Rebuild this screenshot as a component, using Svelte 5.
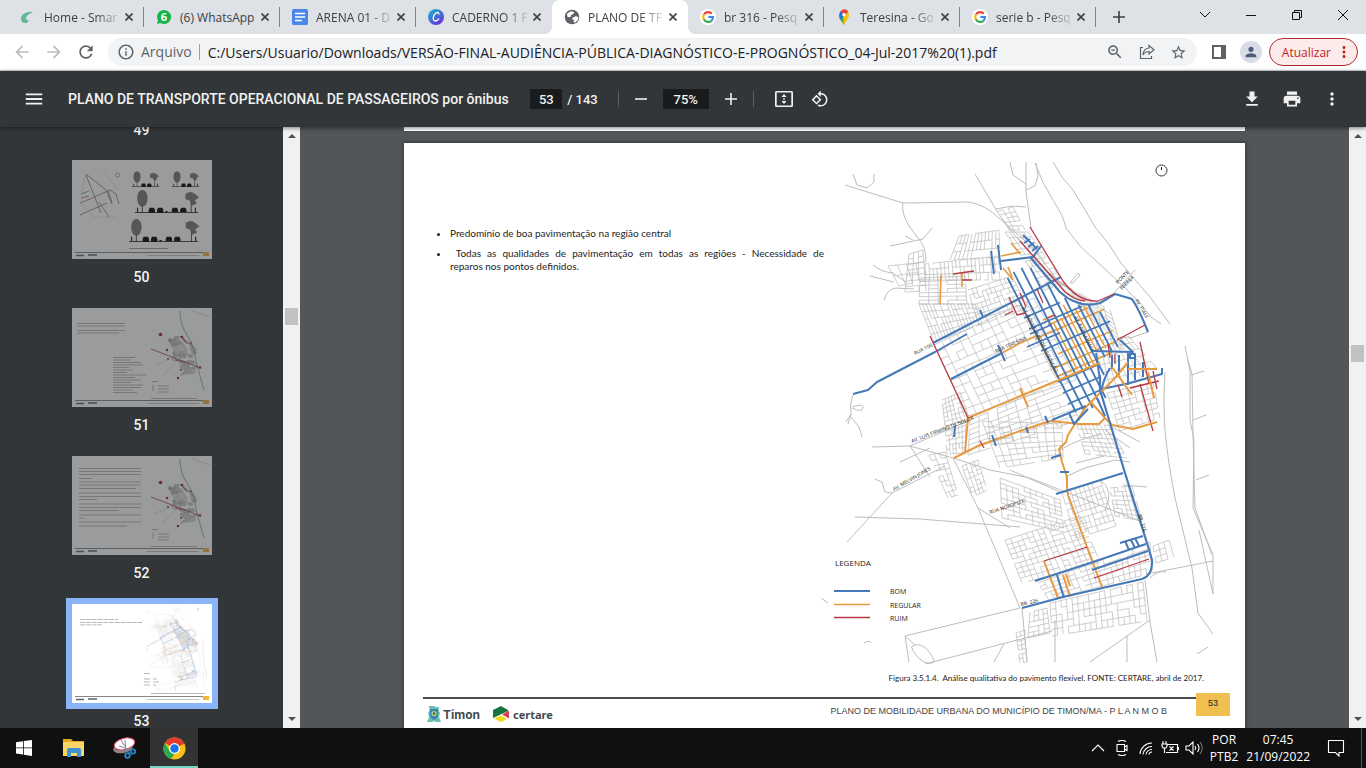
<div class="window">
  <header class="tabs">
    {#each tabs as tab}
      <div class="tab" class:active={tab.active}>
        {@render favicon(tab.icon)}
        <span class="tab-title" class:whole={tab.whole}>{tab.title}</span>
        <button class="tab-close" aria-label="Fechar">
          <svg viewBox="0 0 8 8" width="8" height="8"><path d="M.5.5l7 7M7.5.5l-7 7" /></svg>
        </button>
      </div>
    {/each}
    <button class="new-tab" aria-label="Nova guia">
      <svg viewBox="0 0 12 12" width="12" height="12"><path d="M6 0v12M0 6h12" /></svg>
    </button>
    <div class="controls">
      <button aria-label="Pesquisar guias"><svg viewBox="0 0 12 12" width="12" height="12"><path d="M1 3l5 5 5-5" /></svg></button>
      <button aria-label="Minimizar"><svg viewBox="0 0 12 12" width="12" height="12"><path d="M1 6.500h10" /></svg></button>
      <button aria-label="Restaurar"><svg viewBox="0 0 12 12" width="12" height="12"><path d="M1.500 3.500h7v7h-7zM3.500 3.500v-2h7v7h-2" /></svg></button>
      <button aria-label="Fechar janela"><svg viewBox="0 0 12 12" width="12" height="12"><path d="M1 1l10 10M11 1L1 11" /></svg></button>
    </div>
  </header>

  <nav class="address">
    <button class="nav-btn faded" aria-label="Voltar">{@render icon(paths.back, 20)}</button>
    <button class="nav-btn faded flip" aria-label="Avançar">{@render icon(paths.back, 20)}</button>
    <button class="nav-btn" aria-label="Recarregar">{@render icon(paths.reload, 20)}</button>
    <div class="omnibox">
      {@render icon(paths.info, 18)}
      <span class="scheme">Arquivo</span>
      <input aria-label="Endereço" value="C:/Users/Usuario/Downloads/VERSÃO-FINAL-AUDIÊNCIA-PÚBLICA-DIAGNÓSTICO-E-PROGNÓSTICO_04-Jul-2017%20(1).pdf">
      <button class="nav-btn" aria-label="Zoom">{@render icon(paths.zoomOut, 18)}</button>
      <button class="nav-btn" aria-label="Compartilhar">
        <svg class="line" viewBox="0 0 16 16" width="16" height="16"><path d="M4 3.500H1.500v11h11V12M10 1.500l5 4.200-5 4.200V7.500C7 7.500 5 9 4 11c.2-4 2.500-6.600 6-7z" /></svg>
      </button>
      <button class="nav-btn" aria-label="Favoritos">{@render icon(paths.star, 17)}</button>
    </div>
    <button class="nav-btn panel" aria-label="Painel lateral">
      <svg viewBox="0 0 14 14" width="14" height="14"><path fill="#5f6368" fill-rule="evenodd" d="M0 0h14v14H0zM2 2v10h7V2z" /></svg>
    </button>
    <button class="avatar" aria-label="Perfil">{@render icon(paths.person, 16)}</button>
    <button class="update">Atualizar {@render icon(paths.more, 18)}</button>
  </nav>

  <div class="pdf-bar">
    <div class="bar-start">
      <button aria-label="Menu">{@render icon(paths.menu, 22)}</button>
      <h1>PLANO DE TRANSPORTE OPERACIONAL DE PASSAGEIROS por ônibus</h1>
    </div>
    <div class="bar-middle">
      <input class="page-no" aria-label="Página" value="53">
      <span class="total">/ 143</span>
      <i></i>
      <button aria-label="Diminuir zoom"><svg viewBox="0 0 12 12" width="12" height="12"><path d="M0 5.200h12v1.600H0z" /></svg></button>
      <input class="zoom" aria-label="Nível de zoom" value="75%">
      <button aria-label="Aumentar zoom"><svg viewBox="0 0 12 12" width="12" height="12"><path d="M5.200 0h1.600v5.200H12v1.600H6.800V12H5.200V6.800H0V5.200h5.200z" /></svg></button>
      <i></i>
      <button class="fit" aria-label="Ajustar à página">
        <svg viewBox="0 0 18 16" width="18" height="16"><path fill-rule="evenodd" d="M1.500 0h15A1.500 1.500 0 0118 1.500v13a1.500 1.500 0 01-1.500 1.500h-15A1.500 1.500 0 010 14.500v-13A1.500 1.500 0 011.500 0zm.2 1.600v12.800h14.600V1.600zM9 3l2.500 3h-5zM9 13l2.500-3h-5zM8.200 7.200h1.600v1.600H8.200z" /></svg>
      </button>
      <button aria-label="Girar">{@render icon(paths.rotate, 18)}</button>
    </div>
    <div class="bar-end">
      <button aria-label="Baixar">{@render icon(paths.download, 20)}</button>
      <button aria-label="Imprimir">{@render icon(paths.print, 20)}</button>
      <button aria-label="Mais ações">{@render icon(paths.more, 20)}</button>
    </div>
  </div>

  <div class="viewer">
    <aside class="sidebar">
      <span class="thumb-no">49</span>
      {#each [50, 51, 52, 53] as number}
        <a class="thumb" class:current={number === 53} href="#page-{number}">
          <svg viewBox="0 0 140 99">
            <rect width="140" height="99" fill="#fff" />
            {#if number === 50}
              {@render streetProfiles()}
            {:else if number === 53}
              <path class="thumb-text" d="M8 15.500h38M8 18.500h62M8 20.800h22" stroke-dasharray="5 .8" />
              <svg x="70" y="2" width="70" height="86" viewBox="824 155 421 512" opacity=".8">{@render cityMap()}</svg>
              <path d="M72 69.500h6M72 75h6M72 78h6M72 81h6M81 75h4M81 78h6M81 81h3M79 89.500h54" stroke="#888" stroke-width=".6" />
            {:else}
              {@render accidentMap(number)}
            {/if}
            <path d="M3 92.500h128" stroke="#666" stroke-width=".8" />
            <path d="M4 95.500h8M16 95h9" stroke="#567" stroke-width="1.500" />
            <path d="M75 95.500h52" stroke="#aaa" stroke-width=".7" />
            <rect x="131" y="92" width="6" height="4" fill="#f0b43c" />
          </svg>
          <span class="thumb-no">{number}</span>
        </a>
      {/each}
    </aside>
    <div class="scrollbar side"><b></b></div>

    <main>
      <div class="prev-page"></div>
      <article class="page" id="page-53">
        <div class="slide">
          <ul>
            <li>Predomínio de boa pavimentação na região central</li>
            <li>&nbsp;Todas as qualidades de pavimentação em todas as regiões - Necessidade de reparos&nbsp;nos pontos definidos.</li>
          </ul>
          <svg class="map" viewBox="824 155 421 512">
            {@render cityMap()}
            <g class="street-names">
              {#each streetNames as s}
                <text transform="translate({s.x} {s.y}) rotate({s.angle})">{s.name}</text>
              {/each}
            </g>
            <text class="legend-title" x="835" y="566">LEGENDA</text>
            {#each legend as row}
              <path d="M834 {row.y}h36" stroke={row.color} stroke-width={row.width} />
              <text class="legend" x="890" y={row.y + 3}>{row.label}</text>
            {/each}
          </svg>
        </div>
        <p class="caption">Figura 3.5.1.4.&nbsp; Análise qualitativa do pavimento flexível. FONTE: CERTARE, abril de 2017.</p>
        <footer>
          <div class="foot">
            <div class="timon">
              <svg viewBox="0 0 14 16" width="14" height="16">
                <path d="M7 0l2 1 3 0-.5 3L13 7l-1 4 2 5H9l-2-1-2 1H0l2-5-1-4 1.500-3L2 0h3z" fill="#69bdb3" />
                <path d="M3 3h8v6c0 3-2 4-4 5-2-1-4-2-4-5z" fill="#3d84b5" />
                <circle cx="7" cy="7.500" r="2.600" fill="#b7d36a" /><circle cx="7" cy="7.500" r="1.200" fill="#276489" />
              </svg>
              Timon
            </div>
            <div class="certare">
              <svg viewBox="0 0 16 16" width="16" height="16">
                <path d="M0 4l8-4 7 4v1L0 12z" fill="#18733c" /><path d="M9 8.500l7-4v8z" fill="#dd4053" /><path d="M1 12.500l7-3 6 3.500-6 3z" fill="#f3d918" />
              </svg>
              certare
            </div>
            <span>PLANO DE MOBILIDADE URBANA DO MUNICÍPIO DE TIMON/MA - P L A N M O B</span>
          </div>
          <strong>53</strong>
        </footer>
      </article>
    </main>
    <div class="scrollbar main"><b></b></div>
  </div>

  <div class="taskbar">
    <button aria-label="Iniciar">
      <svg viewBox="0 0 16 16" width="16" height="16" fill="#fff"><path d="M0 2.200L7 1.200v6.300H0zM7.800 1.100L16 0v7.500H7.800zM0 8.300h7v6.300l-7-1zM7.800 8.300H16V16l-8.200-1.200z" /></svg>
    </button>
    <button aria-label="Explorador de Arquivos">
      <svg viewBox="0 0 22 18" width="22" height="18"><path d="M0 0h8l2 2h11v15H0z" fill="#e5a722" /><path d="M0 3h21v14H0z" fill="#fbd667" /><path d="M4 18V10.500a1.500 1.500 0 011.500-1.500h11a1.500 1.500 0 011.500 1.500V18h-4v-4H8v4z" fill="#3e93d1" /></svg>
    </button>
    <button aria-label="Ferramenta de Captura">
      <svg viewBox="0 0 24 22" width="24" height="22"><ellipse cx="11" cy="11" rx="10" ry="5" fill="#8d8588" transform="rotate(-12 11 11)" /><ellipse cx="12.500" cy="7" rx="10.500" ry="5.600" fill="#fff" stroke="#d8455a" transform="rotate(-14 12 7)" /><path d="M9 3l8 13M7 9l11 4M13 3l1 12" stroke="#88a" fill="none" /><g fill="none" stroke="#2787c9" stroke-width="1.800"><circle cx="15.500" cy="18.500" r="2.300" /><circle cx="21" cy="14.500" r="2.200" /></g></svg>
    </button>
    <button class="running" aria-label="Google Chrome">
      <svg viewBox="0 0 24 24" width="23" height="23"><circle cx="12" cy="12" r="11.500" fill="#fbc116" /><path d="M12 12L2 6.300A11.500 11.500 0 0122 6.300L22 7z" fill="#e33b2e" /><path d="M2 6.300L7.500 15l4.500 2.500-3.500 5.500A11.500 11.500 0 012 6.300z" fill="#2da94f" /><circle cx="12" cy="12" r="5.700" fill="#fff" /><circle cx="12" cy="12" r="4.400" fill="#1a73e8" /></svg>
    </button>
    <div class="tray">
      <svg viewBox="0 0 24 16" width="24" height="16"><path d="M6 11l6-6 6 6" /></svg>
      <svg viewBox="0 0 24 16" width="24" height="16"><path d="M7 4.500h7.500v7H7zM14.500 7l2.500-1.500v5L14.500 9M8 1.500q4-2 8 0M8 14.500q4 2 8 0" /></svg>
      <svg viewBox="0 0 24 16" width="24" height="16"><path d="M6 14A12 12 0 0118 3M9 14.500A9 9 0 0118 6.500M12 14.500a6 6 0 016-5M15 14.500a3 3 0 013-2.500" /></svg>
      <svg viewBox="0 0 24 16" width="24" height="16"><path d="M5 1v3M8 1v3M4 4h5v2l-1 2H5L4 6zM6.500 8v5M9.500 4.500h10v8H8M20.500 7v3M11.500 6.500l4 4M15.500 6.500l-4 4" /></svg>
      <svg viewBox="0 0 24 16" width="24" height="16"><path d="M4 6h3l4-4v12l-4-4H4zM13 6q1.500 2 0 4M15.500 4q3 4 0 8" /><path d="M18 2q4.500 6 0 12" opacity=".4" /></svg>
      <span>POR<br>PTB2</span>
      <time>07:45<br>21/09/2022</time>
      <button aria-label="Notificações"><svg viewBox="0 0 18 18" width="18" height="18"><path d="M1.500 1.500h15v12H12v3.500l-3.500-3.500h-7z" /></svg></button>
    </div>
  </div>
</div>

{#snippet icon(d, size)}
  <svg class="icon" viewBox="0 0 24 24" width={size} height={size}><path {d} /></svg>
{/snippet}

{#snippet favicon(name)}
  <svg viewBox="0 0 16 16" width="16" height="16">
    {#if name === 'leaf'}
      <path d="M13 3C7 2 1 5 1 10c0 3 2 4 4 4 3 0 4-2 3-3-1 0-2-.5-2-1.500C6 7 9 5 13 3z" fill="#63b795" />
    {:else if name === 'whatsapp'}
      <path d="M8 1a7 7 0 11-3.500 13L1 15l1-3.500A7 7 0 018 1z" fill="#16b34a" />
      <text x="8" y="12" text-anchor="middle" fill="#fff" font-size="11" font-weight="700">6</text>
    {:else if name === 'docs'}
      <rect width="16" height="16" rx="1.500" fill="#4a86e8" />
      <path d="M3 4.500h10M3 8h10M3 11.500h7" stroke="#fff" stroke-width="1.600" />
    {:else if name === 'canva'}
      <defs><linearGradient id="canva" x1="0" y1="0" x2=".7" y2="1"><stop stop-color="#12bfcb" /><stop offset="1" stop-color="#6a30dd" /></linearGradient></defs>
      <circle cx="8" cy="8" r="8" fill="url(#canva)" />
      <path d="M11 5.500c0-2-1.500-2.500-3-1.500-3 2-4 8-.5 8 1.500 0 2.700-1 3.500-2.500" fill="none" stroke="#fff" stroke-width="1.300" />
    {:else if name === 'globe'}
      <svg viewBox="1 1 22 22" width="16" height="16"><circle cx="12" cy="12" r="10" fill="#5f6368" /><path d="M5 8l5-4 5 1-1 3-3 1-1 3H6zM13 13l4-2 4 1-1 4-4 4-2-1 1-3-3-1z" fill="#fff" /></svg>
    {:else if name === 'maps'}
      <path d="M8 16c-.8-3-4.800-5-4.800-9.500L8 6z" fill="#34a853" /><path d="M3.200 6.500c0-2 .6-3.200 1.800-4.400L8 6l-4 4.500z" fill="#1a73e8" />
      <path d="M4.500 2.500C7-.8 11-.2 12.300 3L8 7z" fill="#ea4335" /><path d="M12 3c2 3 .5 6-1.500 8.500C9 13.300 8.500 14.500 8 16l-3.500-4.500z" fill="#fbbc04" /><path d="M8 16c-.7-2.500-2-3.500-3.500-5L7 8z" fill="#34a853" />
      <circle cx="8" cy="5.800" r="1.800" fill="#fff" />
    {:else}
      <circle cx="8" cy="8" r="8" fill="#fff" />
      <g fill="none" stroke-width="2.200">
        <path d="M11.800 4.800A5 5 0 004 5.300" stroke="#ea4335" /><path d="M4 5.300a5 5 0 000 5.400" stroke="#fbbc05" />
        <path d="M4 10.700a5 5 0 007.500 1" stroke="#34a853" /><path d="M11.500 11.700A5 5 0 0013 8H8.300" stroke="#4285f4" />
      </g>
    {/if}
  </svg>
{/snippet}

{#snippet cityMap()}
  <g fill="none" stroke-linejoin="round">
    <path d={blocks} stroke="#b9b9b9" stroke-width=".7" />
    {#each roads as d}
      <path {d} stroke="#bdbdbd" stroke-width="1" />
    {/each}
    {#each rated as r}
      <path d={r.d} stroke={r.color} stroke-width={r.width} />
    {/each}
    <circle cx="1161.500" cy="170.500" r="5.500" stroke="#333" /><path d="M1161.500 167v3" stroke="#333" />
  </g>
{/snippet}

{#snippet streetProfiles()}
  <g fill="none">
    <path d="M14 15l15 38M8 55l27-12M27 42l10 15M14 14l20 16 6 14M36 31l4 11M9 34l8-3" stroke="#777" stroke-width=".8" />
    <path d="M8 43l12-5 18-8 6 4 3 10M9 38l8-2" stroke="#a66" stroke-width=".8" />
    <path d="M14 14l-5 20M30 10l17 20M10 44l12 13h22" stroke="#ccc" stroke-width=".5" />
    <circle cx="45.500" cy="15" r="2" stroke="#777" stroke-width=".6" />
  </g>
  {#each profiles as p}
    <g transform="translate({p.x} {p.y}) scale({p.scale})">
      <ellipse cx="7" cy="-14" rx="5" ry="8" fill="#777" />
      <path d={p.far} fill="#777" />
      <path d="M6.500-8h1V0h-1zM{p.width - 7}-10h1V0h-1z" fill="#555" />
      <path d="M0-.6h{p.width}V0H0zM2-5h1v4H2zM13-3l1-2h4l1 2v2.400h-6zM21-3l1-2h4l1 2v2.400h-6zM{p.width - 3}-5h1v4h-1z" />
      {#if p.scale > 1}<path d="M35-3l1-2h4l1 2v2.400h-6zM43-3l1-2h4l1 2v2.400h-6zM29-2h2v1.400h-2z" />{/if}
    </g>
  {/each}
  <path d="M57 88.500h39" stroke="#777" stroke-width=".7" />
{/snippet}

{#snippet accidentMap(number)}
  {#if number === 51}
    <path class="thumb-text" d="M5 15.500h48M5 18h48M5 22.500h48M5 25h42" />
    <path class="thumb-text" d="M41 49.500h22M41 52h18M41 54.500h28M41 57h30M41 59.500h16M41 62h20M41 64.500h14M41 67h34M41 69.500h22M41 72h28M41 74.500h18M41 77h30M41 79.500h28M41 82h20M41 84.500h24" />
  {:else}
    <path class="thumb-text" d="M7 12.500h62M7 15.500h62M7 18.500h62M7 22.500h13M7 26h62M7 29h62M7 32.500h57M7 37h62M7 40.500h62M7 43.500h18M7 48h62M7 51.500h62M7 54.500h40M7 59h62M7 62h5M7 66h62M7 70h48" />
  {/if}
  <g fill="none">
    <path d="M108 3q0 14 7 24 8 12 9 27l8 28" stroke="#b4bcb7" stroke-width="1.200" />
    <svg x="96" y="28" width="30" height="40" viewBox="900 230 270 420" preserveAspectRatio="none"><path d={blocks} stroke="#888" stroke-width="2" /></svg>
    <path d="M82 58l22-10M90 68l14-14M120 3l18 6" stroke="#bbb" stroke-width=".5" />
    <path d="M79 41l50 19M109 28l6 8M103 52l10 2" stroke="#a33a4a" stroke-width=".8" />
    <path d="M80 73.500h6M81 77v6M86 78h11M86 81h11M86 84h11M79 90.500h46" stroke="#888" stroke-width=".6" />
  </g>
  <g fill="#a3223a"><circle cx="88.500" cy="26.500" r="1.800" /><circle cx="95" cy="42" r="1.200" /><circle cx="110" cy="29" r="1.300" /><circle cx="119" cy="35" r=".8" /><circle cx="96" cy="51" r=".9" /><circle cx="128" cy="59.500" r="1.200" /><circle cx="106" cy="70" r="1.200" /><circle cx="109" cy="62" r=".9" /></g>
{/snippet}

<script>
const tabs = [
  { title: 'Home - Smar', icon: 'leaf' },
  { title: '(6) WhatsApp', icon: 'whatsapp', whole: true },
  { title: 'ARENA 01 - D', icon: 'docs' },
  { title: 'CADERNO 1 F', icon: 'canva' },
  { title: 'PLANO DE TF', icon: 'globe', active: true },
  { title: 'br 316 - Pesq', icon: 'google' },
  { title: 'Teresina - Go', icon: 'maps' },
  { title: 'serie b - Pesq', icon: 'google' }
]

const paths = {
  back: 'M20 11H7.830l5.590-5.590L12 4l-8 8 8 8 1.410-1.410L7.830 13H20v-2z',
  reload: 'M17.650 6.350C16.200 4.900 14.210 4 12 4c-4.420 0-7.990 3.580-7.990 8s3.570 8 7.990 8c3.730 0 6.840-2.550 7.730-6h-2.080c-.820 2.330-3.040 4-5.650 4-3.310 0-6-2.690-6-6s2.690-6 6-6c1.660 0 3.140.690 4.220 1.780L13 11h7V4l-2.350 2.350z',
  info: 'M11 7h2v2h-2zm0 4h2v6h-2zm1-9C6.480 2 2 6.480 2 12s4.480 10 10 10 10-4.480 10-10S17.520 2 12 2zm0 18c-4.410 0-8-3.590-8-8s3.590-8 8-8 8 3.590 8 8-3.590 8-8 8z',
  zoomOut: 'M15.500 14h-.790l-.280-.270C15.410 12.590 16 11.110 16 9.500 16 5.910 13.090 3 9.500 3S3 5.910 3 9.500 5.910 16 9.500 16c1.610 0 3.090-.590 4.230-1.570l.270.280v.790l5 4.990L20.490 19l-4.990-5zm-6 0C7.010 14 5 11.990 5 9.500S7.010 5 9.500 5 14 7.010 14 9.500 11.990 14 9.500 14zM7 8.800h5v1.400H7z',
  star: 'M22 9.240l-7.190-.620L12 2 9.190 8.630 2 9.240l5.460 4.730L5.820 21 12 17.270 18.180 21l-1.630-7.030L22 9.240zM12 15.400l-3.760 2.270 1-4.280-3.320-2.880 4.380-.380L12 6.100l1.710 4.040 4.380.380-3.320 2.880 1 4.280L12 15.400z',
  person: 'M12 12c2.210 0 4-1.790 4-4s-1.790-4-4-4-4 1.790-4 4 1.790 4 4 4zm0 2c-2.670 0-8 1.340-8 4v2h16v-2c0-2.660-5.330-4-8-4z',
  more: 'M12 8c1.100 0 2-.9 2-2s-.9-2-2-2-2 .9-2 2 .9 2 2 2zm0 2c-1.100 0-2 .9-2 2s.9 2 2 2 2-.9 2-2-.9-2-2-2zm0 6c-1.100 0-2 .9-2 2s.9 2 2 2 2-.9 2-2-.9-2-2-2z',
  menu: 'M3 18h18v-2H3v2zm0-5h18v-2H3v2zm0-7v2h18V6H3z',
  rotate: 'M7.340 6.410L.860 12.900l6.490 6.480 6.490-6.480-6.500-6.490zM3.690 12.900l3.660-3.660L11 12.900l-3.660 3.660-3.650-3.660zm15.670-6.260C17.610 4.880 15.300 4 13 4V.760L8.760 5 13 9.240V6c1.790 0 3.580.680 4.950 2.050 2.730 2.730 2.730 7.170 0 9.900C16.580 19.320 14.790 20 13 20c-.970 0-1.940-.210-2.840-.610l-1.490 1.490C10.020 21.620 11.510 22 13 22c2.300 0 4.610-.880 6.360-2.640 3.520-3.510 3.520-9.210 0-12.720z',
  download: 'M19 9h-4V3H9v6H5l7 7 7-7zM5 18v2h14v-2H5z',
  print: 'M19 8H5c-1.660 0-3 1.340-3 3v6h4v4h12v-4h4v-6c0-1.660-1.340-3-3-3zm-3 11H8v-5h8v5zm3-7c-.550 0-1-.450-1-1s.450-1 1-1 1 .450 1 1-.450 1-1 1zm-1-9H6v4h12V3z'
}

const good = '#4579b8'
const regular = '#e79a40'
const bad = '#b83a45'

const legend = [
  { label: 'BOM', y: 591, color: good, width: 2 },
  { label: 'REGULAR', y: 604.5, color: regular, width: 1.3 },
  { label: 'RUIM', y: 617.5, color: bad, width: 1.3 }
]

const streetNames = [
  { name: 'RUA 100', x: 915, y: 355, angle: -26 },
  { name: 'RUA TERESINA', x: 996, y: 353, angle: -24 },
  { name: 'AV. LUIS FIRMINO DE SOUZA', x: 912, y: 443, angle: -21 },
  { name: 'AV. MELVIN JONES', x: 894, y: 491, angle: -30 },
  { name: 'RUA NORDESTE', x: 990, y: 514, angle: -18 },
  { name: 'AV. BOULEVARD DE ASSUNÇÃO', x: 1022, y: 308, angle: 63 },
  { name: 'AV. PARNARAMA', x: 1074, y: 317, angle: 64 },
  { name: 'PONTE', x: 1118, y: 284, angle: -45 },
  { name: 'FERREA', x: 1122, y: 290, angle: -45 },
  { name: 'AV. PIAUÍ', x: 1135, y: 300, angle: 60 },
  { name: 'BR- 316', x: 1138, y: 515, angle: 72 },
  { name: 'BR- 226', x: 1021, y: 606, angle: -13 }
]

// corners clockwise from top left, then columns and rows of blocks
const districts = [
  [959, 236, 999, 230, 1000, 257, 950, 260, 12, 3],
  [909, 254, 923, 250, 926, 291, 905, 292, 3, 7],
  [925, 264, 998, 256, 1000, 280, 926, 280, 19, 3],
  [888, 266, 925, 262, 926, 280, 899, 286, 4, 2],
  [920, 278, 965, 276, 967, 304, 919, 304, 5, 7],
  [968, 290, 1012, 276, 1028, 308, 979, 325, 11, 7],
  [919, 304, 975, 304, 982, 324, 934, 342, 16, 5],
  [934, 345, 1034, 298, 1076, 380, 968, 416, 13, 10],
  [1005, 232, 1028, 232, 1064, 283, 1045, 290, 5, 10],
  [998, 211, 1013, 207, 1025, 230, 1009, 230, 3, 5],
  [942, 400, 960, 392, 970, 420, 945, 426, 6, 6],
  [970, 420, 1060, 382, 1080, 420, 968, 455, 10, 7],
  [945, 427, 965, 420, 966, 453, 947, 454, 6, 6],
  [982, 421, 1062, 424, 1063, 458, 1000, 468, 9, 8],
  [929, 455, 945, 452, 958, 495, 948, 498, 3, 8],
  [962, 466, 978, 460, 987, 490, 973, 497, 4, 7],
  [1000, 478, 1060, 500, 1064, 532, 1002, 518, 10, 8],
  [1062, 493, 1100, 480, 1116, 526, 1076, 538, 9, 8],
  [1110, 488, 1132, 486, 1142, 521, 1115, 516, 6, 7],
  [1005, 540, 1080, 516, 1100, 562, 1022, 583, 14, 9],
  [1038, 583, 1150, 542, 1152, 573, 1049, 600, 19, 5],
  [1030, 612, 1047, 608, 1050, 633, 1028, 638, 4, 5],
  [1050, 603, 1143, 582, 1147, 621, 1052, 636, 17, 5],
  [1016, 633, 1025, 630, 1027, 662, 1020, 663, 2, 7],
  [1153, 546, 1169, 540, 1174, 557, 1156, 563, 3, 3],
  [1107, 393, 1153, 382, 1160, 418, 1120, 431, 7, 7],
  [1077, 425, 1108, 425, 1127, 458, 1085, 454, 8, 7],
  [1096, 341, 1128, 336, 1162, 374, 1103, 389, 9, 6],
  [1035, 260, 1060, 283, 1110, 310, 1122, 350, 8, 8]
]

// joins the lattice points of a quad, dropping some segments so blocks look irregular
function mesh([ax, ay, bx, by, cx, cy, dx, dy, cols, rows]) {
  const at = (i, j) => {
    const u = i / cols
    const v = j / rows
    const x = (ax * (1 - u) + bx * u) * (1 - v) + (dx * (1 - u) + cx * u) * v
    const y = (ay * (1 - u) + by * u) * (1 - v) + (dy * (1 - u) + cy * u) * v
    return `${x.toFixed(1)} ${y.toFixed(1)}`
  }
  let d = ''
  for (let i = 0; i <= cols; i++) {
    for (let j = 0; j <= rows; j++) {
      const noise = Math.abs(Math.sin(i * 12.9 + j * 78.2 + ax) * 437) % 1
      if (i < cols && noise > 0.16) d += `M${at(i, j)}L${at(i + 1, j)}`
      if (j < rows && noise < 0.84) d += `M${at(i, j)}L${at(i, j + 1)}`
    }
  }
  return d
}

const blocks = districts.map(mesh).join('')

const roads = [
  'M845 185L903 203L968 202Q985 204 1000 219L1032 247L1062 287',
  'M853 174l4 11 10 3 7-6V174',
  'M975 174L998 213L1012 232L1036 260',
  'M1010 162l3 13 13 9V162M1026 184v8l5 36M1026 190l9-4 3-10-2-13',
  'M996 209l16-3 14 1',
  'M1035 163Q1042 183 1053 200Q1064 217 1066 228L1080 246L1120 283L1140 303L1151 317L1161 324',
  'M1053 162L1062 177L1073 190L1084 208L1095 227L1108 243L1121 263L1137 282L1150 297L1170 324',
  'M903 203q-2 10 6 23l12 16q5 7 5 20M890 246l33-7 9-11M905 236l8 4',
  'M873 265q8 7 20 8l14 10M870 276l24 6M884 300q3-11 12-12l18 1',
  'M1070 283l8-10 2 2-7 8zM1113 294l22-24',
  'M853 395q-4 10-2 19l-3 10M851 414l-5 8M851 417l8 10 3 10M852 407q12-4 11 1t-11 0',
  'M872 447L910 446L970 420M900 462l30-14',
  'M910 446L953 458L990 470L1030 478L1140 521M910 446l20 31',
  'M847 542L892 493L945 466M875 479l7 3 3 10 7 1',
  'M855 517L920 519L1020 527M953 458L978 508L1020 608M978 508l32 20',
  'M905 636L1020 608M925 664L1052 631M905 636l4 26M905 636l10 9',
  'M915 645q8-2 15 8t2 10q-8 2-16-8t-1-10',
  'M1022 608l5 54M1055 620v42M994 662l10-18M1145 580l5 42 7 40M1127 635v27M1150 620l-60 42',
  'M1152 573L1213 561M1150 578q8-8 16-6',
  'M1165 372q-2 32 0 58t10 68L1192 568L1198 613L1213 634',
  'M1185 346l5 25V420L1194 440L1193 508L1213 555V594L1199 530',
  'M1191 375l13-4M1193 420l13-5M1196 480l13-5M1197 654l11-7',
  'M1188 360l4 14 1 60 2 74 17 47',
  'M1076 463l28-7M1105 430l25 18M1108 425l32 17M1115 460l15 2M1123 485l24 2',
  'M1060 450q20-12 42-16M1065 477l20-9 30-8M1100 480q15 10 5 30M1010 470l50 22',
  'M821 598l7 5M864 643q4-3 7-1M1112 346q10-12 20-8M1148 332l-18 6'
]

// downtown avenues: x where they meet y 316, then first and last y
const avenues = [
  [1027, 278, 412], [1036, 272, 410], [1046, 268, 408], [1055, 268, 403], [1064, 283, 398],
  [1074, 298, 375], [1084, 305, 357], [1094, 305, 352], [1102, 312, 347]
]
const backStreets = [[1050, 322, 370], [1060, 318, 368], [1069, 305, 366], [1079, 308, 350], [1089, 306, 345]]

const avenue = ([x, from, to]) => {
  const at = y => (x + (y - 316) * 0.51).toFixed(1)
  return `M${at(from)} ${from}L${at(to)} ${to}`
}

// cross streets climb to the east: start x, start y, end x
const crossGood = [[1024, 318, 1060], [1029, 329, 1082], [1041, 351, 1110], [1058, 382, 1098], [1063, 393, 1100], [1068, 404, 1103], [1030, 334, 1052], [1027, 347, 1060]]
const crossRegular = [[1035, 339, 1104], [1058, 354, 1113], [1052, 369, 1116], [1058, 376, 1112], [1048, 325, 1088]]
const cross = ([x, y, end]) => `M${x} ${y}L${end} ${(y - (end - x) * 0.43).toFixed(1)}`

const rated = [
  { color: regular, width: 1.5, d: backStreets.map(avenue).join('') + crossRegular.map(cross).join('') },
  { color: regular, width: 1.7, d: 'M1020 303L1058 378M1002 353L1022 342L1036 336M1043 320l11-5' },
  { color: regular, width: 1.6, d: 'M941 275l-1 29M962 273v14M1001 256l20-4M1011 243l9 11M1003 268l10 12M1008 267l4 10' },
  { color: good, width: 1.8, d: avenues.map(avenue).join('') },
  { color: good, width: 1.6, d: crossGood.map(cross).join('') },
  { color: good, width: 2, d: 'M853 394L868 390L877 382L935 352L967 334M933 343L1061 277M951 379L1002 353M998 345l7 16M980 310l3 7' },
  { color: good, width: 2, d: 'M991 251l3 23M998 245l3 25M1001 261L1033 257L1041 246M1023 235l14 14M1024 243l6-4M1028 247l6-4M1032 251l6-5' },
  { color: good, width: 2.2, d: 'M1030 257L1060 292Q1078 309 1100 303L1115 294L1132 299Q1140 311 1148 332' },
  { color: good, width: 2, d: 'M1092 351L1133 352L1120 340M1096 353L1100 380M1112 355v14M1119 355v20M1128 352v33M1135 358v22M1110 368q-6 10-8 20M1102 389L1130 383L1162 374V368M1143 362v15M1130 354h5v4h-5z' },
  { color: bad, width: 1.3, d: 'M1030 227L1063 281Q1078 302 1098 301L1114 294M1020 241L1045 269L1065 292Q1075 300 1085 301M930 336L968 418M953 274l21-3M962 280h10' },
  { color: bad, width: 1.3, d: 'M1117 340L1145 325M1140 342L1149 384M1140 384L1153 431M1009 297l8 18 8-2M1005 315l8-4M1020 293l6 14M1037 289l6 14M1048 318l7-3M1130 388l29-7M1115 354v10M1153 371l4 18M1118 385l4 12M1108 344l2 14' },
  { color: regular, width: 2, d: 'M954 458L980 445L1020 431L1050 421L1080 424L1099 424L1105 418L1090 401M968 418L1030 392L1100 363M968 418L965 452M1020 388l8 19' },
  { color: regular, width: 2, d: 'M1128 362L1115 378L1095 398L1085 408L1068 435L1066 442L1059 449L1062 462L1067 477V486L1068 495L1087 547L1102 587' },
  { color: regular, width: 2, d: 'M1105 418L1112 425L1133 429L1157 422M1112 367l20 28M1128 369h29M1148 372l6 26M1044 561L1058 598M1063 575l7 22M1066 574l4 12' },
  { color: good, width: 2.2, d: 'M1100 375V390L1110 423L1125 473L1147 543L1152 560Q1153 575 1142 579L1063 597L1022 608' },
  { color: good, width: 2, d: 'M1123 473L1056 494M1035 581L1093 562L1146 544M1092 570L1148 551M1120 543L1143 536M1125 541l4 9M1131 540l4 8M1135 538l4 8M1057 575L1064 598' },
  { color: good, width: 2, d: 'M1088 409L1074 424L1069 413M1052 420L1086 406M1051 458l10-3M1060 472h9M1045 416l3 7M992 435l4 11M1026 427l2 6M1097 398l8 18M955 426l-1 11' },
  { color: bad, width: 1.3, d: 'M1044 561L1087 547M1094 578L1149 559M980 441l4 7' }
]

const smallTree = 'M25-18q4-3 9 0l3 3-3 3 1 2-5 1-1-3-4-1z'
const largeTree = 'M48-18q5-4 9 0l4 3-4 3 2 3-5 2-2-5-4-1z'
const profiles = [
  { x: 60, y: 27, scale: 0.72, width: 38, far: smallTree },
  { x: 100, y: 27, scale: 0.72, width: 38, far: smallTree },
  { x: 63, y: 53, scale: 1.05, width: 60, far: largeTree },
  { x: 57, y: 82, scale: 1.05, width: 66, far: largeTree.replace('M48', 'M54') }
]
</script>

<style>
:global(body) {
  margin: 0;
}
.window {
  display: flex;
  flex-direction: column;
  height: 100vh;
  min-height: 480px;
  overflow: hidden;
  font-family: "Open Sans", "Noto Sans", sans-serif;
  font-size: 12px;
  color: #3c4043;
}
button {
  display: flex;
  align-items: center;
  justify-content: center;
  flex: none;
  padding: 0;
  border: 0;
  background: none;
  color: inherit;
  font: inherit;
}
input {
  min-width: 0;
  box-sizing: border-box;
  padding: 0;
  border: 0;
  background: none;
  color: inherit;
  font: inherit;
}
svg {
  display: block;
  flex: none;
}
.icon {
  fill: currentColor;
}

/* tab strip */
.tabs {
  display: flex;
  flex: none;
  height: 34px;
  padding-left: 8px;
  background: #dee1e6;
}
.tab {
  position: relative;
  display: flex;
  align-items: center;
  box-sizing: border-box;
  width: 136px;
  padding: 0 9px 0 12px;
}
.tab::after {
  content: '';
  position: absolute;
  right: 0;
  width: 1px;
  height: 20px;
  background: #808387;
}
.tab.active {
  background: #fff;
  border-radius: 8px 8px 0 0;
}
.tab.active::before,
.tab.active::after {
  content: '';
  position: absolute;
  bottom: 0;
  width: 8px;
  height: 8px;
  background: radial-gradient(circle at 0 0, transparent 8px, #fff 8px);
}
.tab.active::before {
  left: -8px;
}
.tab.active::after {
  right: -8px;
  background: radial-gradient(circle at 100% 0, transparent 8px, #fff 8px);
}
.tab:has(+ .active)::after {
  display: none;
}
.tab-title {
  flex: 1;
  margin-left: 8px;
  white-space: nowrap;
  mask-image: linear-gradient(to right, #000 65%, transparent);
}
.tab-title.whole {
  mask-image: none;
}
.tab-close {
  width: 12px;
}
.tab-close svg,
.new-tab svg {
  fill: none;
  stroke: #3c4043;
  stroke-width: 1.6;
}
.new-tab {
  width: 46px;
}
.controls {
  display: flex;
  align-items: flex-start;
  margin-left: auto;
}
.controls button {
  width: 46px;
  height: 29px;
}
.controls svg {
  fill: none;
  stroke: #111;
}

/* address bar */
.address {
  display: flex;
  align-items: center;
  flex: none;
  height: 36px;
  padding: 0 8px 0 6px;
  background: #fff;
  border-bottom: 1px solid #d5d7da;
  color: #5f6368;
}
.nav-btn {
  width: 32px;
  height: 28px;
}
.faded {
  color: #babcbe;
}
.flip {
  transform: scaleX(-1);
}
.omnibox {
  display: flex;
  align-items: center;
  flex: 1;
  height: 28px;
  margin-left: 6px;
  padding: 0 2px 0 9px;
  border-radius: 14px;
  background: #f1f3f4;
  font-size: 14px;
}
.scheme {
  margin-left: 6px;
  padding-right: 7px;
  border-right: 1px solid #9aa0a6;
  line-height: 16px;
}
.omnibox input {
  flex: 1;
  margin-left: 8px;
  color: #202124;
}
.line {
  fill: none;
  stroke: #5f6368;
  stroke-width: 1.2;
}
.panel {
  margin-left: 6px;
}
.avatar {
  width: 22px;
  height: 22px;
  margin: 0 7px 0 5px;
  border-radius: 50%;
  background: #d8dce6;
  color: #50597a;
}
.update {
  gap: 4px;
  height: 28px;
  padding: 0 4px 0 12px;
  border: 1px solid #b3282d;
  border-radius: 14px;
  background: #fbeceb;
  color: #c5221f;
}

/* pdf toolbar */
.pdf-bar {
  position: relative;
  z-index: 1;
  display: flex;
  flex: none;
  height: 56px;
  background: #323639;
  box-shadow: 0 1px 4px rgba(0, 0, 0, 0.5);
  color: #f1f1f1;
  fill: #f1f1f1;
  font: 500 14px Roboto, sans-serif;
}
.bar-start,
.bar-middle,
.bar-end {
  display: flex;
  align-items: center;
}
.bar-start,
.bar-end {
  flex: 1;
}
.bar-start {
  padding-left: 18px;
}
.bar-start button {
  width: 32px;
}
h1 {
  margin: 0 0 0 18px;
  font-size: 14px;
  font-weight: 500;
  white-space: nowrap;
}
.bar-middle {
  font-size: 13px;
}
.bar-middle button {
  width: 32px;
  height: 32px;
}
.bar-middle i {
  width: 1px;
  height: 16px;
  margin: 0 6px;
  background: #5c6063;
}
.bar-middle input {
  width: 32px;
  height: 20px;
  background: #191b1c;
  text-align: center;
}
.bar-middle .zoom {
  width: 46px;
  margin: 0 6px;
}
.total {
  margin: 0 14px 0 5px;
}
.bar-middle .fit {
  margin: 0 4px 0 8px;
}
.bar-end {
  justify-content: flex-end;
  gap: 8px;
  padding-right: 18px;
}
.bar-end button {
  width: 32px;
}

/* viewer */
.viewer {
  display: flex;
  flex: 1;
  min-height: 0;
  background: #525659;
}
.sidebar {
  display: flex;
  flex-direction: column;
  align-items: center;
  flex: none;
  width: 283px;
  overflow: hidden;
  background: #323639;
}
.sidebar > .thumb-no {
  margin: -5px 0 22px;
}
.thumb {
  width: 140px;
  margin-bottom: 23px;
  text-decoration: none;
}
.thumb > svg {
  width: 100%;
  opacity: 0.5;
}
.thumb.current > svg {
  opacity: 1;
  outline: 6px solid #8ab4f8;
}
.thumb-no {
  display: block;
  color: #f5f5f5;
  font: 500 14px/16px Roboto, sans-serif;
  text-align: center;
}
.thumb .thumb-no {
  margin-top: 10px;
}
.thumb-text {
  stroke: #888;
  stroke-width: 0.6;
}
.scrollbar {
  display: flex;
  flex-direction: column;
  align-items: center;
  box-sizing: border-box;
  width: 17px;
  flex: none;
  background: #f1f1f1;
}
.scrollbar::before,
.scrollbar::after {
  content: '';
  margin: 7px 0;
  border: 4px solid transparent;
  border-top-width: 0;
  border-bottom-color: #505050;
}
.scrollbar::after {
  margin-top: auto;
  border-width: 4px 4px 0;
  border-color: #505050 transparent;
}
.scrollbar b {
  width: 13px;
  height: 17px;
  background: #c1c1c1;
}
.side b {
  margin-top: 163px;
}
.main b {
  margin-top: 200px;
}
main {
  flex: 1;
  min-width: 0;
  overflow: hidden;
}
.prev-page {
  max-width: 841px;
  height: 4px;
  margin: 0 auto 12px;
  background: #fff;
}
.page {
  max-width: 841px;
  margin: 0 auto;
  padding: 12px 0 20px;
  box-sizing: border-box;
  background: #fff;
  box-shadow: 0 0 4px rgba(0, 0, 0, 0.5);
  color: #222;
}
.slide {
  display: grid;
  grid-template-columns: 420fr 421fr;
}
ul {
  margin: 0;
  padding: 72px 0 0 46px;
  font: 10px/13px Lato, sans-serif;
  text-align: justify;
}
li {
  margin-bottom: 7px;
}
.map {
  width: 100%;
  overflow: visible;
}
.map text {
  font-family: "Open Sans", sans-serif;
  fill: #222;
}
.street-names text {
  font-size: 5px;
}
.map .legend-title {
  font-size: 8px;
}
.map .legend {
  font-size: 7px;
}
.caption {
  margin: 5px 41px 0 0;
  font: 8px/12px Lato, sans-serif;
  text-align: right;
}
footer {
  display: flex;
  margin: 9px 15px 0 19px;
}
.foot {
  display: flex;
  align-items: center;
  flex: 1;
  height: 28px;
  margin-top: 4px;
  padding: 0 29px 0 4px;
  border-top: 2px solid #4a4a50;
}
.timon,
.certare {
  display: flex;
  align-items: center;
  gap: 2px;
  margin-top: 2px;
  color: #444b50;
  font: 700 12px Inter, sans-serif;
}
.certare {
  gap: 4px;
  margin-left: 13px;
  font: 700 11px "Noto Sans", sans-serif;
}
.foot span {
  margin: 0 0 4px auto;
  color: #444;
  font: 9px "Liberation Sans", sans-serif;
}
footer strong {
  width: 34px;
  height: 23px;
  background: #efc050;
  font: 9px/20px "Liberation Sans", sans-serif;
  text-align: center;
}

/* taskbar */
.taskbar {
  display: flex;
  gap: 2px;
  flex: none;
  height: 40px;
  background: #101010;
  color: #fff;
}
.taskbar > button {
  width: 48px;
}
.taskbar .running {
  box-sizing: border-box;
  padding-top: 2px;
  border-bottom: 2px solid #76d6c4;
  background: #333;
}
.tray {
  display: flex;
  align-items: center;
  margin-left: auto;
  padding-right: 4px;
  line-height: 17px;
  text-align: center;
}
.tray svg {
  fill: none;
  stroke: #fff;
  stroke-width: 1.1;
}
.tray span {
  margin: 0 8px 0 4px;
}
.tray button {
  width: 52px;
  height: 40px;
  border-right: 1px solid #555;
}
</style>
